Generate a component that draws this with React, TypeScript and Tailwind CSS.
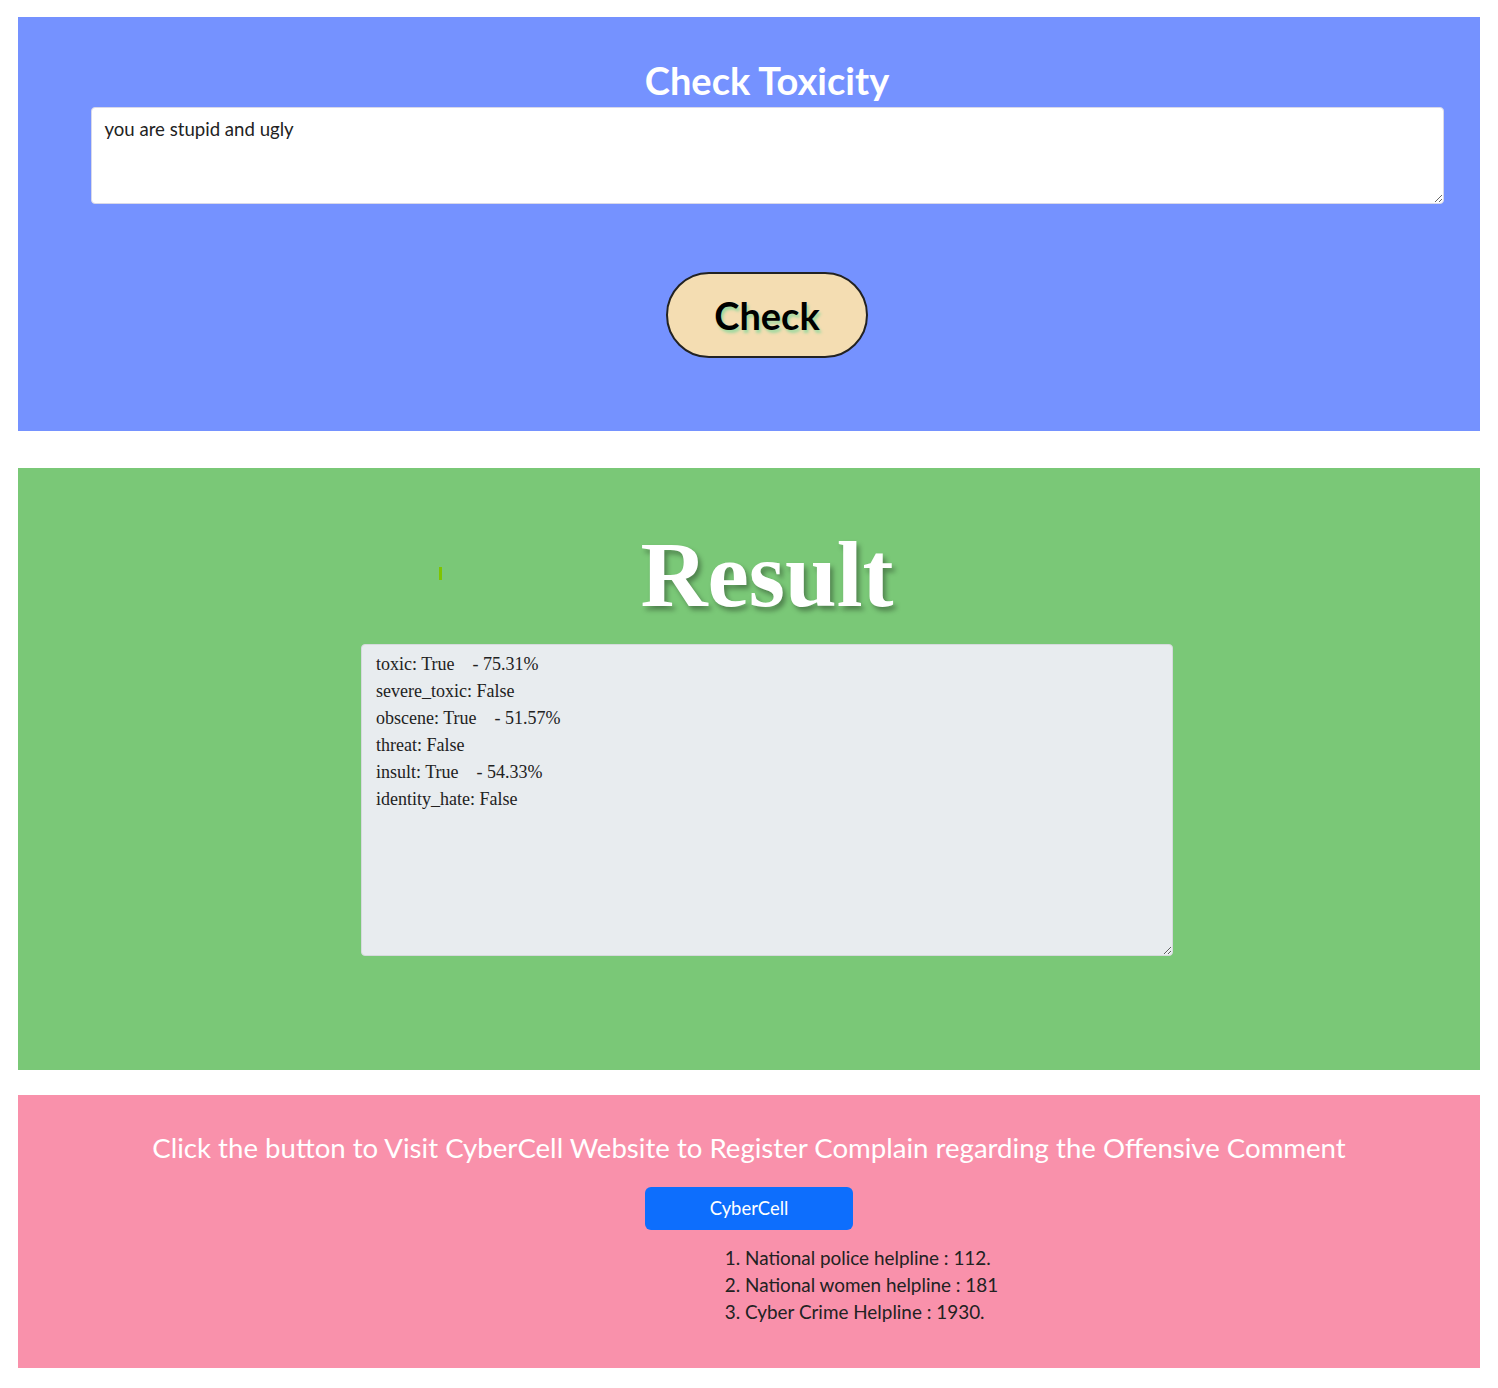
import { useState } from "react";

const scores = [
  "toxic: True    - 75.31%",
  "severe_toxic: False",
  "obscene: True    - 51.57%",
  "threat: False",
  "insult: True    - 54.33%",
  "identity_hate: False",
];

const helplines = [
  "National police helpline : 112.",
  "National women helpline : 181",
  "Cyber Crime Helpline : 1930.",
];

export default function App() {
  const [text, setText] = useState("you are stupid and ugly");

  return (
    <div className="min-h-[1388px] bg-white px-[18px] pt-[17px] font-['Lato','Noto_Sans',sans-serif]">
      {/* Input card */}
      <section className="flex h-[414px] flex-col items-center bg-[#7592ff] pl-[36px] pt-[41px]">
        <h1 className="text-[38px] font-bold leading-[44px] text-white">Check Toxicity</h1>
        <textarea
          value={text}
          onChange={(e) => setText(e.target.value)}
          spellCheck={false}
          className="mt-[5px] h-[97px] w-[1353px] resize-y rounded border border-[#d8d8e8] bg-white px-[13px] py-[9px] text-[18.6px] leading-[24px] text-[#222] outline-none"
        />
        <button className="mt-[68px] h-[86px] w-[202px] rounded-full border-2 border-[#222] bg-[#f4ddb2] text-[38px] font-bold text-black [text-shadow:2px_3px_3px_#9fd9a0]">
          Check
        </button>
      </section>

      {/* Result */}
      <section className="relative mt-[37px] flex h-[602px] flex-col items-center bg-[#7ac877] pl-[36px] pt-[57px]">
        <span className="absolute left-[421px] top-[99px] h-[13px] w-[3px] bg-[#7fc400]" />
        <h2 className="font-['Liberation_Serif',serif] text-[93px] font-bold leading-[100px] text-white [text-shadow:3px_4px_5px_rgba(0,0,0,0.35)]">
          Result
        </h2>
        <textarea
          readOnly
          value={scores.join("\n")}
          className="mt-[19px] h-[312px] w-[812px] resize-y rounded border border-[#d6dadd] bg-[#e8ecef] px-[14px] py-[6px] font-['Liberation_Serif',serif] text-[18px] leading-[27px] whitespace-pre text-[#222] outline-none"
        />
      </section>

      {/* CyberCell */}
      <section className="mt-[25px] flex h-[273px] flex-col items-center bg-[#f991ab] pt-[34px]">
        <p className="text-[27.6px] leading-[38px] text-white">
          Click the button to Visit CyberCell Website to Register Complain regarding the Offensive Comment
        </p>
        <button className="mt-[20px] h-[43px] w-[208px] rounded-md bg-[#0d6efd] text-[18.4px] text-white">
          CyberCell
        </button>
        <ol className="mt-[14px] ml-[705px] self-start list-decimal pl-[22px] text-[18.9px] leading-[27px] text-[#222]">
          {helplines.map((h) => (
            <li key={h}>{h}</li>
          ))}
        </ol>
      </section>
    </div>
  );
}
